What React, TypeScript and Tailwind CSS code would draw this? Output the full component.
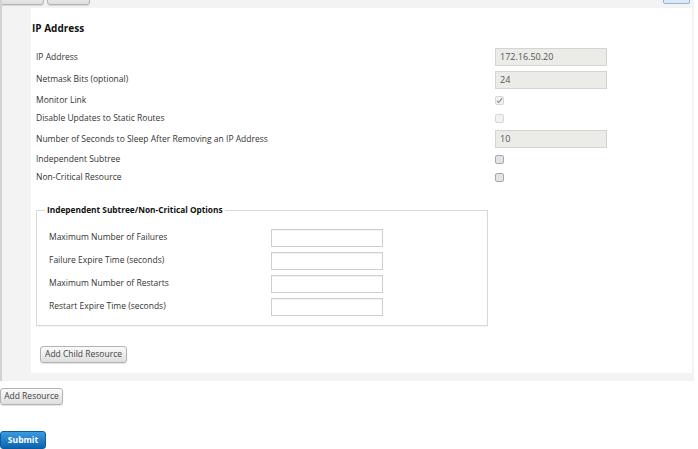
import React from "react";

const font = { fontFamily: '"Open Sans", "DejaVu Sans", sans-serif' };

function Check({ checked, disabled }: { checked?: boolean; disabled?: boolean }) {
  return (
    <span
      className={
        "inline-flex h-[9px] w-[9px] items-center justify-center rounded-[2px] border " +
        (disabled ? "border-[#d6d6d6] bg-[#f2f2f2]" : "border-[#a9a9a9] bg-[#e4e4e4]")
      }
    >
      {checked && (
        <svg width="7" height="7" viewBox="0 0 7 7">
          <path d="M1 3.8 L2.8 5.5 L6 1.3" fill="none" stroke="#8a8a8a" strokeWidth="1.1" />
        </svg>
      )}
    </span>
  );
}

function ROInput({ value }: { value: string }) {
  return (
    <div className="flex h-[18px] w-[112px] items-center border border-[#d4d4d0] bg-[#ebebe7] pl-[4px] text-[9px] text-[#555]">
      {value}
    </div>
  );
}

function TextInput() {
  return <div className="h-[18px] w-[112px] border border-[#cfcfcf] bg-white shadow-[inset_0_1px_1px_rgba(0,0,0,0.06)]" />;
}

function Btn({ children, className = "" }: { children?: React.ReactNode; className?: string }) {
  return (
    <div
      className={
        "flex items-center justify-center rounded-[3px] border border-[#b3b3b3] bg-gradient-to-b from-[#fbfbfb] to-[#dedede] text-[8.5px] text-[#444] shadow-[0_1px_1px_rgba(0,0,0,0.12)] " +
        className
      }
    >
      {children}
    </div>
  );
}

function Row({ label, h, children }: { label: string; h: string; children: React.ReactNode }) {
  return (
    <div className={"flex items-center " + h}>
      <div className="w-[464px] pl-[5px] text-[8.5px] text-[#333]">{label}</div>
      <div className="flex items-center">{children}</div>
    </div>
  );
}

function SubRow({ label, children }: { label: string; children: React.ReactNode }) {
  return (
    <div className="flex h-[23px] items-center">
      <div className="w-[226px] pl-[4px] text-[8.5px] text-[#333]">{label}</div>
      {children}
    </div>
  );
}

export default function App() {
  return (
    <div className="relative h-[449px] w-[698px] overflow-hidden bg-white" style={font}>
      <div className="w-[694px] border-l-2 border-[#d2d2d2] bg-[#f3f3f3] pb-[8px]">
        <div className="flex h-[8px] items-end overflow-hidden pb-[3px]">
          <div className="flex gap-[3px] -ml-[2px]">
            <Btn className="h-[16px] w-[44px]" />
            <Btn className="h-[16px] w-[43px]" />
          </div>
          <div className="ml-auto mr-[4px] mb-[1px] h-[16px] w-[27px] rounded-[2px] border border-[#8fb6d8] bg-[#dce9f4]" />
        </div>
        <div className="ml-[29px] mr-[2px] bg-white pb-[10px] pt-[12px]">
          <div className="pl-[1px] text-[10px] font-bold leading-[16px] text-[#111]">IP Address</div>
          <div className="mt-[10px]">
            <Row label="IP Address" h="h-[22px]">
              <ROInput value="172.16.50.20" />
            </Row>
            <Row label="Netmask Bits (optional)" h="h-[23px]">
              <ROInput value="24" />
            </Row>
            <Row label="Monitor Link" h="h-[19px]">
              <Check checked disabled />
            </Row>
            <Row label="Disable Updates to Static Routes" h="h-[17px]">
              <Check disabled />
            </Row>
            <Row label="Number of Seconds to Sleep After Removing an IP Address" h="h-[24px]">
              <ROInput value="10" />
            </Row>
            <Row label="Independent Subtree" h="h-[17px]">
              <Check />
            </Row>
            <Row label="Non-Critical Resource" h="h-[18px]">
              <Check />
            </Row>
          </div>
          <fieldset className="ml-[5px] mt-[18px] w-[452px] border border-[#d9d9d9] pb-[7px] pl-[8px] pt-[10px] shadow-[0_1px_1px_rgba(0,0,0,0.04)]">
            <legend className="px-[2px] text-[8.3px] font-bold leading-[12px] text-[#111]">
              Independent Subtree/Non-Critical Options
            </legend>
            <SubRow label="Maximum Number of Failures">
              <TextInput />
            </SubRow>
            <SubRow label="Failure Expire Time (seconds)">
              <TextInput />
            </SubRow>
            <SubRow label="Maximum Number of Restarts">
              <TextInput />
            </SubRow>
            <SubRow label="Restart Expire Time (seconds)">
              <TextInput />
            </SubRow>
          </fieldset>
          <div className="ml-[9px] mt-[20px]">
            <Btn className="h-[17px] w-[87px]">Add Child Resource</Btn>
          </div>
        </div>
      </div>
      <div className="mt-[7px]">
        <Btn className="h-[17px] w-[63px]">Add Resource</Btn>
      </div>
      <div className="mt-[26px]">
        <div className="flex h-[18px] w-[46px] items-center justify-center rounded-[3px] border border-[#0b5c9e] bg-gradient-to-b from-[#3a9be0] to-[#0a64b0] text-[8.5px] font-bold text-white">
          Submit
        </div>
      </div>
    </div>
  );
}
